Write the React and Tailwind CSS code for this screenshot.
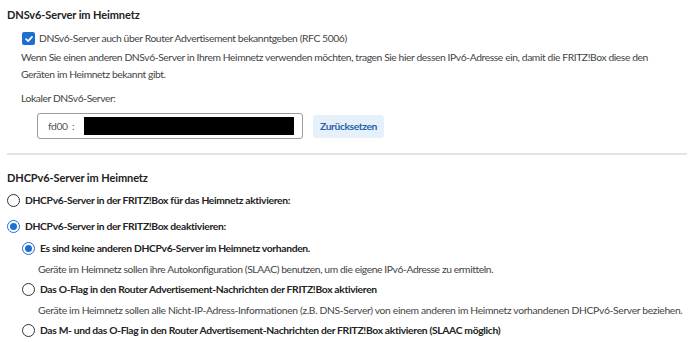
function Radio({ checked }) {
  return checked ? (
    <span className="flex h-[13px] w-[13px] shrink-0 items-center justify-center rounded-full border-[1.5px] border-[#1f6fd0]">
      <span className="h-[7px] w-[7px] rounded-full bg-[#1f6fd0]" />
    </span>
  ) : (
    <span className="h-[13px] w-[13px] shrink-0 rounded-full border-[1.5px] border-[#333]" />
  );
}

function RadioRow({ checked, children, className = "" }) {
  return (
    <div className={`flex h-[17px] items-center gap-[5px] ${className}`}>
      <Radio checked={checked} />
      <span className="font-bold tracking-[-0.33px] text-[#222]">{children}</span>
    </div>
  );
}

export default function App() {
  return (
    <div className="w-[690px] h-[342px] overflow-hidden bg-white font-['Lato',sans-serif] text-[10.3px] leading-[17px] tracking-[-0.4px] text-[#444]">
      <section className="pl-[7px] pt-[6px]">
        <h2 className="text-[11px] font-bold tracking-[-0.1px] text-[#222]">DNSv6-Server im Heimnetz</h2>

        <div className="ml-[15px] mt-[7px] flex h-[17px] items-center gap-[4px]">
          <span className="flex h-[13px] w-[13px] items-center justify-center rounded-[2px] bg-[#1f6fd0]">
            <svg viewBox="0 0 12 12" className="h-[10px] w-[10px]" fill="none" stroke="white" strokeWidth="2" strokeLinecap="round" strokeLinejoin="round">
              <path d="M2.5 6.2 5 8.6 9.6 3.4" />
            </svg>
          </span>
          <span>DNSv6-Server auch über Router Advertisement bekanntgeben (RFC 5006)</span>
        </div>

        <p className="ml-[14px] mt-[2px] w-[660px]">
          Wenn Sie einen anderen DNSv6-Server in Ihrem Heimnetz verwenden möchten, tragen Sie hier dessen IPv6-Adresse ein, damit die FRITZ!Box diese den Geräten im Heimnetz bekannt gibt.
        </p>

        <div className="ml-[14px] mt-[7px]">Lokaler DNSv6-Server:</div>

        <div className="ml-[30px] mt-[6px] flex items-center gap-[10px]">
          <div className="flex h-[26px] w-[266px] items-center rounded-[3px] border border-[#9c9c9c] pl-[10px] pr-[8px]">
            <span className="w-[36px] shrink-0 text-[#555]">fd00&nbsp;&nbsp;:</span>
            <span className="h-[18px] flex-1 bg-black" />
          </div>
          <button className="h-[23px] rounded-[3px] bg-[#e6f0fa] px-[7px] font-bold text-[#2861a8]">Zurücksetzen</button>
        </div>

        <div className="mr-[3px] mt-[14px] h-[2px] bg-[#e4e4e4]" />

        <h2 className="mt-[14px] text-[11px] font-bold tracking-[-0.1px] text-[#222]">DHCPv6-Server im Heimnetz</h2>

        <RadioRow className="mt-[6px]">DHCPv6-Server in der FRITZ!Box für das Heimnetz aktivieren:</RadioRow>
        <RadioRow checked className="mt-[9px]">DHCPv6-Server in der FRITZ!Box deaktivieren:</RadioRow>

        <div className="ml-[15px]">
          <RadioRow checked className="mt-[5px]">Es sind keine anderen DHCPv6-Server im Heimnetz vorhanden.</RadioRow>
          <p className="ml-[16px] mt-[4px]">Geräte im Heimnetz sollen ihre Autokonfiguration (SLAAC) benutzen, um die eigene IPv6-Adresse zu ermitteln.</p>
          <RadioRow className="mt-[3px]">Das O-Flag in den Router Advertisement-Nachrichten der FRITZ!Box aktivieren</RadioRow>
          <p className="ml-[16px] mt-[4px] whitespace-nowrap tracking-[-0.33px]">Geräte im Heimnetz sollen alle Nicht-IP-Adress-Informationen (z.B. DNS-Server) von einem anderen im Heimnetz vorhandenen DHCPv6-Server beziehen.</p>
          <RadioRow className="mt-[3px]">Das M- und das O-Flag in den Router Advertisement-Nachrichten der FRITZ!Box aktivieren (SLAAC möglich)</RadioRow>
        </div>
      </section>
    </div>
  );
}
